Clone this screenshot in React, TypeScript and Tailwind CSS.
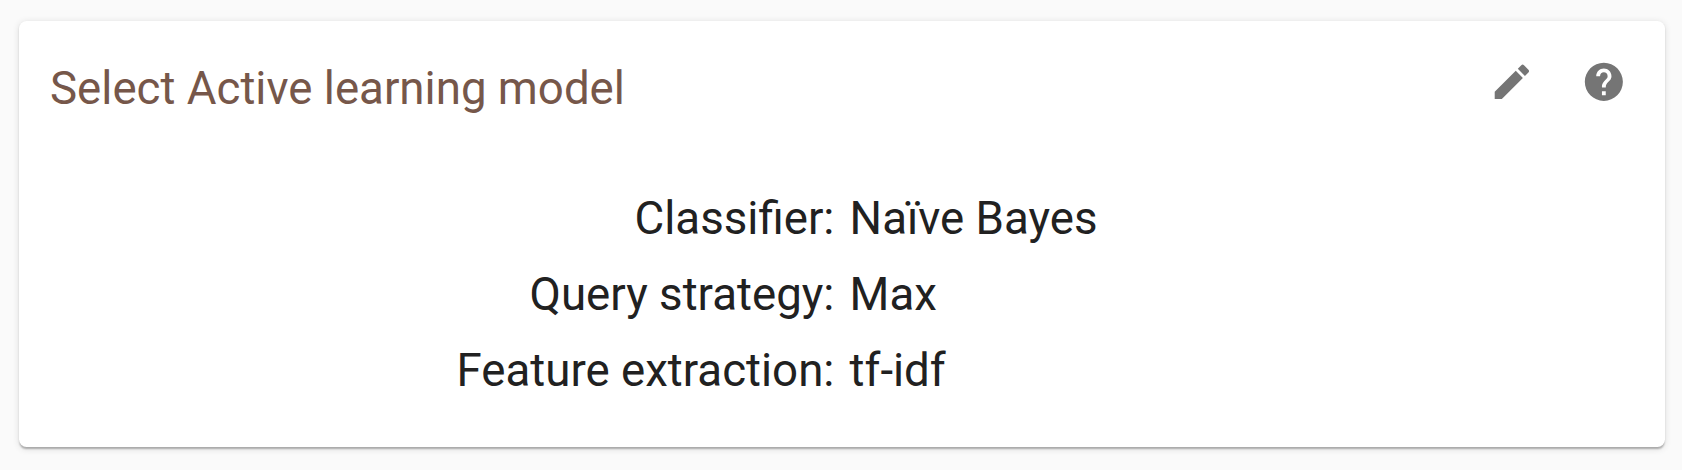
import { MdEdit, MdHelp } from "react-icons/md";

const rows = [
  ["Classifier:", "Naïve Bayes"],
  ["Query strategy:", "Max"],
  ["Feature extraction:", "tf-idf"],
];

export default function App() {
  return (
    <main className="h-[470px] bg-[#fafafa] pt-[21px] pl-[19px] font-['Roboto',sans-serif]">
      <section className="h-[426px] w-[1646px] rounded-[7.6px] bg-white shadow-[0_3.8px_1.9px_-1.9px_rgba(0,0,0,0.16),0_1.9px_1.9px_0_rgba(0,0,0,0.12),0_1.9px_7px_0_rgba(0,0,0,0.12)]">
        <header className="flex h-[156px] items-start justify-between pt-[37.5px] pr-[38.3px] pl-[31px]">
          <h2 className="pt-[2.5px] text-[45.65px] leading-[55px] text-[#76574a]">Select Active learning model</h2>
          <div className="flex gap-[46.2px] text-[#757575]">
            <MdEdit size={45.7} />
            <MdHelp size={45.7} />
          </div>
        </header>
        <dl className="pt-[3.5px] text-[45.65px] leading-[76px] text-[#212121]">
          {rows.map(([label, value]) => (
            <div key={label} className="grid grid-cols-2 gap-[15.2px]">
              <dt className="text-right">{label}</dt>
              <dd>{value}</dd>
            </div>
          ))}
        </dl>
      </section>
    </main>
  );
}
